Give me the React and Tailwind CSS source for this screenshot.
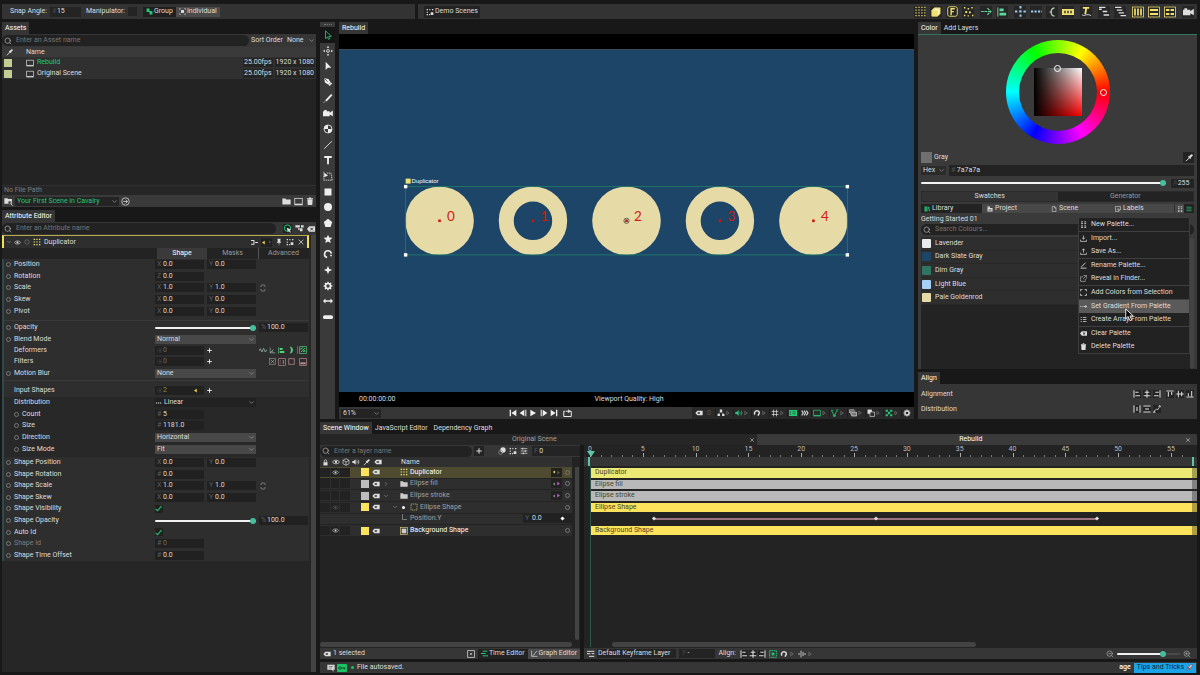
import React, { useState } from 'react';
import { ChevronDown, ChevronRight, Search, Rocket, ZoomIn, ZoomOut } from 'lucide-react';

// 12x12 glyphs, stroked with currentColor unless a shape says otherwise
const GLYPHS = {
  cursor: <path d="M3 1v9.5l2.3-2.2 1.3 2.9 1.6-.7-1.3-2.8H10z" strokeWidth="1" />,
  arrow: <path d="M3.2 1v9.8L5.8 8H10z" fill="currentColor" stroke="none" />,
  moveDots: (
    <g fill="currentColor" stroke="none">
      <path d="M6 0l1.6 2.2H4.4zM6 12l1.6-2.2H4.4zM0 6l2.2-1.6v3.2zM12 6L9.8 4.4v3.2z" />
      <circle cx="6" cy="6" r="1.7" fill="none" stroke="currentColor" />
    </g>
  ),
  pen: <g><path d="M1.5 1.5l5 .8 2.8 4.2-2.8 2.8-4.2-2.8z" fill="currentColor" stroke="none" /><path d="M2 2l3.6 3.6" stroke="#3a3a3a" strokeWidth=".9" /><path d="M7.3 10.3l3-3" strokeWidth="1.8" /></g>,
  pencil: <g><path d="M3.5 9.5l7-7.5" strokeWidth="2.2" /><path d="M1 11.5l1.2-1.2" strokeWidth="1.2" /></g>,
  camera: <path d="M0 4h1.5V2.5h3V4H8v1.6L11.8 3v7L8 7.8V10H0z" fill="currentColor" stroke="none" />,
  quad: (
    <g>
      <circle cx="6" cy="6" r="4.8" strokeWidth="1" />
      <path d="M6 6V1.2A4.8 4.8 0 0 0 1.2 6zM6 6v4.8A4.8 4.8 0 0 0 10.8 6z" fill="currentColor" stroke="none" />
    </g>
  ),
  line: <path d="M1.5 10.5l9-9" strokeWidth="1" />,
  text: <path d="M1.5 1.2h9v2.3H7.1V11H4.9V3.5H1.5z" fill="currentColor" stroke="none" />,
  box3d: (
    <g strokeWidth=".9">
      <path d="M1 1v10M1 11h10M11 11L9.5 2.5M4.5 2.5h5" strokeDasharray="1.6 .7" />
      <path d="M1.5 2l4.5 3.4-4.5 2z" fill="currentColor" stroke="none" />
    </g>
  ),
  square: <path d="M1.8 1.8h8.4v8.4H1.8z" fill="currentColor" stroke="none" />,
  disc: <circle cx="6" cy="6" r="4.8" fill="currentColor" stroke="none" />,
  pentagon: <path d="M6 1l5 3.8L9.2 10.8H2.8L1 4.8z" fill="currentColor" stroke="none" />,
  star: <path d="M6 .8l1.5 3.5 3.8.3-2.9 2.5.9 3.8L6 8.9l-3.3 2 .9-3.8L.7 4.6l3.8-.3z" fill="currentColor" stroke="none" />,
  arc: <path d="M5 10.2A4.1 4.1 0 1 1 10 5.6M9.9 7l-.6 1.6" strokeWidth="1.9" />,
  spark: <path d="M6 1l1.4 3.6L11 6 7.4 7.4 6 11 4.6 7.4 1 6l3.6-1.4z" fill="currentColor" stroke="none" />,
  gear: (
    <g>
      <circle cx="6" cy="6" r="3" strokeWidth="2" />
      <path d="M6 .8v2M6 9.2v2M.8 6h2M9.2 6h2M2.3 2.3l1.4 1.4M8.3 8.3l1.4 1.4M9.7 2.3L8.3 3.7M3.7 8.3L2.3 9.7" strokeWidth="1.7" />
    </g>
  ),
  widthArrow: <path d="M0 6l3-3v2h6V3l3 3-3 3V7H3v2z" fill="currentColor" stroke="none" />,
  pill: <rect x="0" y="4" width="12" height="4.5" rx="2" fill="currentColor" stroke="none" />,
  dots: <path d="M.5 1.5h11M.5 4.5h11M.5 7.5h11M.5 10.5h11" strokeDasharray="1.3 1.9" strokeWidth="1.3" />,
  cube: <g><path d="M1 4l3-3h7v7l-3 3H1z" fill="#fdf3b4" stroke="#c8b84a" /><path d="M1 4h7v7H1z" fill="#f0df71" stroke="none" /></g>,
  eff: <g><rect x=".8" y=".8" width="10.4" height="10.4" rx="2" strokeWidth="1" /><path d="M4.5 10V3h4M4.5 6.2h3" strokeWidth="1.5" /></g>,
  scatter: <path d="M1 1h1.6v1.6H1zM5 2.2h1.6v1.6H5zM9 1h1.6v1.6H9zM2.5 5.5h2v2h-2zM6.5 6h2v2h-2zM1 9.5h1.6v1.6H1zM9.8 9.5h1.6v1.6H9.8zM5 10h1.4v1.4H5z" fill="currentColor" stroke="none" />,
  toArrow: <path d="M0 6h10.5M7 2.5L10.8 6 7 9.5" strokeDasharray="3 .7" strokeWidth="1.3" />,
  alignL: <g><path d="M1 .5v11" strokeWidth="1.2" /><path d="M3 1.8h5v3.4H3zM3 6.8h8v3.4H3z" fill="currentColor" stroke="none" /></g>,
  plusDots: <path d="M6 0v12M0 6h12" strokeWidth="2.2" strokeDasharray="2.6 2" />,
  hDots: <path d="M0 6h12" strokeWidth="2.2" strokeDasharray="2.4 1.4" />,
  halfArc: <path d="M9 1C3.5 2 3.5 10 9 11M3 6h3" strokeWidth="1.4" />,
  ruler: <g><path d="M0 3h12v6H0z" fill="currentColor" stroke="none" /><path d="M3 4.8v2.4M6 4.8v2.4M9 4.8v2.4" stroke="#2a2a2a" strokeWidth="1.4" /></g>,
  textPath: <g><path d="M2 2h7M5.8 2L4.6 9" strokeWidth="2" /><path d="M1 9.5c3 2.5 5-2 10 1" stroke="#ddd" strokeWidth="1" /></g>,
  stagger: <path d="M0 1.5h7M0 3.5h3M4 6h5M5 9.8h6" strokeWidth="1.5" />,
  stagger2: <path d="M0 1.5h7M2 4.5h6M4 7.5h6M6 10.5h6" strokeWidth="1.6" />,
  cols: <g><rect x=".5" y="1" width="11" height="10" strokeWidth=".8" /><path d="M3 2.6v6.8M6 2.6v6.8M9 2.6v6.8" strokeWidth="1.7" /></g>,
  rows: <g><rect x=".5" y="1" width="11" height="10" strokeWidth=".8" /><path d="M2 4h8M2 8h8" strokeWidth="2" /></g>,
  cells: <g><rect x=".5" y="1" width="11" height="10" strokeWidth=".8" /><path d="M2 4h3.4M6.6 4H10M2 8h3.4M6.6 8H10" strokeWidth="2" /></g>,
  dropper: <g><path d="M1.5 10.8l5-5.2" strokeWidth="1.5" /><path d="M5 3.4l3.8 3.8" strokeWidth="1.4" /><path d="M7 5l3-3" strokeWidth="3.2" strokeLinecap="round" /></g>,
  screen: <g><rect x="1" y="1.8" width="10" height="7.6" strokeWidth="1" /><path d="M.5 10.2h11" strokeWidth="1.6" /></g>,
  folder: <path d="M.5 2h4l1 1.3h6V10H.5z" fill="currentColor" stroke="none" />,
  folderSearch: <g><path d="M.5 1.5h4l1 1.3h5V9H.5z" fill="currentColor" stroke="none" /><circle cx="7.5" cy="7.5" r="1.8" fill="#333" stroke="#888" strokeWidth="1" /><path d="M9 9l2.5 2.5" strokeWidth="1.2" /></g>,
  trash: <path d="M2 3.5h8L9.4 12H2.6zM1.5 1.8h3V.6h3v1.2h3V3h-9z" fill="currentColor" stroke="none" />,
  goArrow: <g strokeWidth="1"><circle cx="6" cy="6" r="5" /><path d="M3 6h5.5M6.3 3.6L8.8 6 6.3 8.4" /></g>,
  group: <path d="M1 1h5v4h5v6H6V7H1z" fill="currentColor" stroke="none" />,
  individual: <g><path d="M3.5 3.5h5v5h-5z" fill="currentColor" stroke="none" /><path d="M1 3V1h2M9 1h2v2M11 9v2H9M3 11H1V9" strokeWidth="1" /></g>,
  corners: <path d="M1 1.5h2v2H1zM5 1.5h1.6v2H5zM1 5.5h2v1.6H1zM1 9h2v2H1zM9 1.5h2v2H9zM7 6.5h4v4H7zM4.6 9h1.4v2H4.6z" fill="currentColor" stroke="none" />,
  eye: <g><path d="M.5 6C3 2.4 9 2.4 11.5 6 9 9.6 3 9.6.5 6z" strokeWidth="1.1" /><circle cx="6" cy="6" r="1.7" fill="currentColor" stroke="none" /></g>,
  ring: <circle cx="6" cy="6" r="4.4" strokeWidth="1.3" />,
  grid9: <path d="M1 2h10M1 6h10M1 10h10" strokeDasharray="2 2" strokeWidth="1.8" />,
  nodes: <path d="M0 2.5h5v3.5M0 9h5V6M7 6h5" strokeWidth="1.8" />,
  pin: <path d="M3.5 1h5v1.2H8v3l1.5 2H6.7L6 11.5 5.3 7.2H2.5L4 5.2v-3h-.5z" fill="currentColor" stroke="none" />,
  cross: <path d="M2.5 2.5l7 7M9.5 2.5l-7 7" strokeWidth="1.1" />,
  link: <path d="M3 4.5V3a1.5 1.5 0 0 1 1.5-1.5h3A1.5 1.5 0 0 1 9 3v1.5M3 7.5V9a1.5 1.5 0 0 0 1.5 1.5h3A1.5 1.5 0 0 0 9 9V7.5" strokeWidth="1.2" />,
  list: <path d="M1 2.5h2M5 2.5h6M1 6h2M5 6h6M1 9.5h2M5 9.5h6" strokeWidth="1.3" />,
  plus: <path d="M6 .5v11M.5 6h11" strokeWidth="2" />,
  wave: <path d="M0 7.5L2 4l2.5 5L7 3.5 9.5 9 12 5" strokeWidth="1.1" />,
  axes: <path d="M2 1v9h9M2 10l6-6M5 7.5l2 1" strokeWidth="1.1" />,
  paren: <path d="M4 1h2c4 2.5 4 7.5 0 10H4c2.6-3 2.6-7 0-10z" fill="currentColor" stroke="none" />,
  noise: <g><rect x="1" y="1" width="10" height="10" strokeWidth="1" /><path d="M3 5l3-3M3 9l6-6M6 9l3-3M3 3v2M9 7v2" strokeWidth="1.4" /></g>,
  xbox: <g strokeWidth="1"><rect x="1" y="1" width="10" height="10" /><path d="M3 3l6 6M9 3L3 9" stroke="#bbb" /></g>,
  halfBox: <g strokeWidth="1"><rect x="1" y="1" width="10" height="10" /><path d="M3.5 3v1M3.5 5.5v1M3.5 8v1" /><path d="M8 3v6" stroke="#bbb" /></g>,
  frame: <rect x="1.3" y="1.3" width="9.4" height="9.4" strokeWidth="1.3" />,
  pinkBox: <g strokeWidth="1"><rect x="1" y="1" width="10" height="10" /><path d="M2 8h8" strokeWidth="3" /></g>,
  target: <g><circle cx="6" cy="5.5" r="4.3" strokeWidth="1.3" /><path d="M5 5l6 2.4-2.4.8 2 2.3-1 1-2.2-2.2L6.5 11z" fill="#ddd" stroke="none" /></g>,
  branch: <path d="M.5 1.5h6v3h-6zM8 1.5h3.5v3H8zM4 5.5h2v2H4zM6.5 5.5H10v4H6.5z" fill="currentColor" stroke="none" />,
  tag: <path d="M.5 6l3-3.4H11.5v6.8H3.5zM4 5v2.2h3.4V5z" fill="currentColor" fillRule="evenodd" stroke="none" />,
  clearTag: <g><path d="M0 6l3.2-4H12v8H3.2z" fill="currentColor" stroke="none" /><path d="M5 4l4 4M9 4L5 8" stroke="#222" strokeWidth="1.3" /></g>,
  lock: <g><path d="M2.5 5.5h7V11h-7z" fill="currentColor" stroke="none" /><path d="M4 5.5V3.4a2 2 0 0 1 4 0v2.1" strokeWidth="1.2" /></g>,
  cubeLine: <path d="M6 1l4.6 2.5v5L6 11 1.4 8.5v-5zM1.4 3.5L6 6l4.6-2.5M6 6v5" strokeWidth="1" />,
  sound: <g><path d="M.5 4.5h2L5.5 2v8L2.5 7.5h-2z" fill="currentColor" stroke="none" /><path d="M7 4c1 1.2 1 2.8 0 4M8.8 2.5c2 2 2 5 0 7" strokeWidth="1.1" /></g>,
  skipStart: <path d="M1 1h2v10H1zM11 1v10L3.5 6z" fill="currentColor" stroke="none" />,
  stepBack: <path d="M8 1v10L1 6zM9.5 1H11v10H9.5z" fill="currentColor" stroke="none" />,
  play: <path d="M2 1v10l8.5-5z" fill="currentColor" stroke="none" />,
  stepFwd: <path d="M4 1v10l7-5zM1 1h1.6v10H1z" fill="currentColor" stroke="none" />,
  skipEnd: <path d="M9 1h2v10H9zM1 1v10l7.5-5z" fill="currentColor" stroke="none" />,
  loop: <g><path d="M3 3H1v7h10V3H9" strokeWidth="1.3" /><path d="M4 2.2h3V.4L10 3 7 5.6V3.8H4z" fill="currentColor" stroke="none" /></g>,
  triNodes: <g><path d="M4.2.8h3.6v3.6H4.2zM.8 7h3.6v3.6H.8zM7.6 7h3.6v3.6H7.6z" fill="currentColor" stroke="none" /><path d="M3 7l3-3 3 3" /></g>,
  triOpen: <path d="M3.5 2.5v7l5-3.5z" strokeWidth="1" />,
  triLeft: <path d="M9 1.5v9L2.5 6z" fill="currentColor" stroke="none" />,
  triRight: <path d="M3 1.5v9L9.5 6z" fill="currentColor" stroke="none" />,
  magnet: <path d="M2.8 8.4A3.7 3.7 0 1 1 9.6 6.2L7.4 10" strokeWidth="2.2" />,
  hash: <path d="M3.8 1v10M8.2 1v10M1 3.8h10M1 8.2h10" strokeWidth="1.1" />,
  image: <g><path d="M0 1.5h12v9H0z" fill="currentColor" stroke="none" /><path d="M5 4h5M5 7h5M2 3v6" stroke="#14532d" strokeWidth="1" /></g>,
  forward: <path d="M1 2.5L3.5 6 1 9.5M4.5 2.5L7 6 4.5 9.5M8 2.5L10.5 6 8 9.5" strokeWidth="1.6" />,
  vpath: <path d="M1 3l4 7 4-8M0 2h3M8 1.5h3M3.6 9h3v2h-3z" strokeWidth="1.2" />,
  layers: <g strokeWidth="1"><path d="M4 5h7.5v5.5H4z" fill="#777" /><path d="M2.5 8V3h7M.8 6V1.2h7" /></g>,
  copies: <g><path d="M.8 .8h6.4v6.4H.8z" fill="currentColor" stroke="none" /><path d="M4.5 4.5h6.7v6.7H4.5z" fill="#2a2a2a" /></g>,
  checker: <path d="M1 1h3.3v3.3H1zM7.7 1H11v3.3H7.7zM4.3 4.3h3.4v3.4H4.3zM1 7.7h3.3V11H1zM7.7 7.7H11V11H7.7z" fill="currentColor" stroke="none" />,
  bucket: <g><circle cx="7.5" cy="4.5" r="4" fill="currentColor" stroke="none" /><circle cx="4" cy="8" r="3" stroke="#999" /></g>,
  sliders: <path d="M1 2.5h10M1 6h10M1 9.5h10M4 1v3M8 4.5v3M5 8v3" strokeWidth="1.1" />,
  keyLayer: <path d="M0 2h11M0 5.5h5M7 5.5h4M3 9.5h8" strokeWidth="1.5" />,
  shape: <rect x="1.5" y="1.5" width="9" height="9" strokeWidth="1" stroke="#d8c97a" strokeDasharray="2 1" />,
  filledShape: <g><rect x=".7" y=".7" width="10.6" height="10.6" stroke="#d8c97a" /><path d="M2.5 2.5h7v7h-7z" fill="currentColor" stroke="none" /></g>,
  books: <path d="M1 1h2.6v10H1zM4.4 1H7v10H4.4zM8 1.8l2-.6 2 9-2 .6z" fill="currentColor" stroke="none" />,
  page: <path d="M2.5 1h5l2.5 2.5V11h-7.5zM7 1v3h3" strokeWidth="1.1" />,
  building: <path d="M1 1h5v3h5v7H1zM3 3.2h1.4v1H3zM3 6h6v1H3zM3 8.4h6v1H3z" fill="currentColor" fillRule="evenodd" stroke="none" />,
  label: <path d="M1 1h10v6l-4 4H1zM11 7H7v4M3.5 8L8 3.5" strokeWidth="1.1" />,
  download: <path d="M6 1v6M3.6 4.8L6 7.2l2.4-2.4M1 8v3h10V8" strokeWidth="1.2" />,
  upload: <path d="M6 8V1.5M3.6 4L6 1.4 8.4 4M1 8v3h10V8" strokeWidth="1.2" />,
  rename: <path d="M1 10.5h10M2 8.5l7.5-7" strokeWidth="1.5" />,
  reveal: <path d="M5 3H1v8h8V7M6 1h5v5M11 1L5.5 6.5" strokeWidth="1.1" strokeDasharray="2.5 .6" />,
  fourDots: <path d="M2 1.5h3M7.5 1.5h3M2 4.5h3M7.5 4.5h3M2 8.5h3M7.5 8.5h3M2 11h3M7.5 11h3" strokeWidth="1.6" />,
  focus: <path d="M1 4V1h3M8 1h3v3M11 8v3H8M4 11H1V8" strokeWidth="1.4" />,
  dashArrow: <path d="M0 6h1.5M3 6h1.5M6 6h5.5M9 4l2.4 2L9 8" strokeWidth="1.4" />,
  menu: <path d="M1 2.5h10M1 6h10M1 9.5h10" strokeWidth="1.4" />,
  alLeft: <path d="M1.5 .5v11M3.5 3.5h5M3.5 8.5h7" strokeWidth="1.6" />,
  alCenter: <path d="M6 .5v11M2.5 3.5h7M1 8.5h10" strokeWidth="1.6" />,
  alRight: <path d="M10.5 .5v11M3.5 3.5h5M1.5 8.5h7" strokeWidth="1.6" />,
  alTop: <path d="M.5 1.5h11M3.5 3v7M8.5 3v4.5" strokeWidth="1.6" />,
  alMid: <path d="M.5 6h11M3.5 1v10M8.5 2.5v7" strokeWidth="1.6" />,
  alBottom: <path d="M.5 10.5h11M3.5 5v4M8.5 1.5v8" strokeWidth="1.6" />,
  distH: <path d="M1.5 .5v11M10.5 .5v11M6 3v6" strokeWidth="1.6" />,
  distV: <path d="M.5 1.5h11M.5 10.5h11M3 6h6" strokeWidth="1.6" />,
  distP: <path d="M1 9.5h2v2H1zM9 1h2v2H9zM2.5 9l2-3 3 1L9.5 3" strokeWidth="1.4" strokeDasharray="2 .7" />,
  keyBox: <g><rect x="1" y="1" width="10" height="10" strokeWidth="1.1" /><path d="M4.8 4.8h2.4v2.4H4.8z" fill="currentColor" stroke="none" /></g>,
  timeLines: <path d="M3 2h8M0 6h8M3 10h9" strokeWidth="1.7" />,
  curve: <path d="M1 1v10h10M2.5 9.5C8 9 5 3 11 2" strokeWidth="1.1" />,
  gridBox: <g><rect x="1" y="1" width="10" height="10" strokeWidth="1.4" strokeDasharray="2.4 .8" /><path d="M4 4h4v4H4z" fill="currentColor" stroke="none" /></g>,
  spread: <path d="M4.5 1v10M7.5 3v6M0 6h3M8.5 6H12" strokeWidth="1.2" />,
  chat: <path d="M.5 1h11v7.5H9L11 11.5 6.5 8.5h-6zM2.5 3.3v1h7v-1zM2.5 5.5v1h5v-1z" fill="currentColor" fillRule="evenodd" stroke="none" />,
  key: <path d="M5 6h6M9.5 6v2M3 4.2a1.8 1.8 0 1 0 .1 0" strokeWidth="1.3" />,
  check: <path d="M1 6.5l3.4 3.4L11 1.8" strokeWidth="1.8" />,
};

function Icon({ name, className = 'size-[9px]' }) {
  return (
    <svg viewBox="0 0 12 12" fill="none" stroke="currentColor" className={`shrink-0 ${className}`} aria-hidden="true">
      {GLYPHS[name]}
    </svg>
  );
}

function IconButton({ name, label, className = '', size }) {
  return (
    <button type="button" aria-label={label || name} className={`flex shrink-0 items-center justify-center ${className}`}>
      <Icon name={name} className={size} />
    </button>
  );
}

function Tab({ children, active }) {
  return (
    <button type="button" className={`h-3 px-[3px] ${active ? 'bg-[#363636] text-white' : 'text-[#dddddd]'}`}>
      {children}
    </button>
  );
}

function Field({ id, prefix, value, dim, label }) {
  return (
    <div className="flex h-[9px] w-[49px] shrink-0 items-center bg-[#212121] pl-[2px]">
      <span className="w-[6px] shrink-0 text-[#5d5d5d]">{prefix}</span>
      <input id={id} aria-label={label} defaultValue={value} className={`h-[9px] w-full min-w-0 bg-transparent outline-none ${dim ? 'text-[#6a6a6a]' : ''}`} />
    </div>
  );
}

function Dropdown({ id, label, value, className, icon }) {
  return (
    <div className={`relative flex h-[9px] shrink-0 items-center ${className}`}>
      {icon && <Icon name={icon} className="ml-[1px] size-[6px]" />}
      <select id={id} aria-label={label} className="h-[9px] w-full appearance-none bg-transparent pl-[2px] outline-none">
        <option>{value}</option>
      </select>
      <ChevronDown className="pointer-events-none absolute right-[1px] size-[7px] text-[#aaaaaa]" />
    </div>
  );
}

function Slider({ id, label, value = 100, className }) {
  return (
    <input
      id={id}
      aria-label={label}
      type="range"
      defaultValue={value}
      className={`h-[2px] appearance-none rounded-full [&::-webkit-slider-thumb]:size-[6px] [&::-webkit-slider-thumb]:appearance-none [&::-webkit-slider-thumb]:rounded-full [&::-webkit-slider-thumb]:bg-[#46bd9b] ${className}`}
      style={{ background: `linear-gradient(to right, #f2f2f2 ${value}%, #4a4a4a ${value}%)` }}
    />
  );
}

function SearchBox({ placeholder, className }) {
  return (
    <label className={`flex h-[11px] min-w-0 items-center gap-[4px] rounded-full bg-[#222222] pl-[2px] ${className}`}>
      <Search className="size-[8px] shrink-0 text-[#bbbbbb]" />
      <input aria-label={placeholder} placeholder={placeholder} className="h-[9px] w-full min-w-0 bg-transparent outline-none placeholder:text-[#757575]" />
    </label>
  );
}

const TRANSFORM = [
  { name: 'Position', x: '0.0', y: '0.0' },
  { name: 'Rotation', p: 'Z', x: '0.0' },
  { name: 'Scale', x: '1.0', y: '1.0', link: true },
  { name: 'Skew', x: '0.0', y: '0.0' },
  { name: 'Pivot', x: '0.0', y: '0.0' },
];

const APPEARANCE = [
  { name: 'Opacity', slider: true },
  { name: 'Blend Mode', select: 'Normal' },
  { name: 'Deformers', list: '0', noKey: true, extras: 'deformers' },
  { name: 'Filters', list: '0', noKey: true, extras: 'filters' },
  { name: 'Motion Blur', select: 'None' },
];

const DISTRIBUTION = [
  { name: 'Distribution', select: 'Linear', icon: 'hDots', dark: true, noKey: true },
  { name: 'Count', p: '#', x: '5', sub: true },
  { name: 'Size', p: '#', x: '1181.0', sub: true },
  { name: 'Direction', select: 'Horizontal', sub: true },
  { name: 'Size Mode', select: 'Fit', sub: true },
];

const SHAPE = [
  { name: 'Shape Position', x: '0.0', y: '0.0' },
  { name: 'Shape Rotation', p: '#', x: '0.0' },
  { name: 'Shape Scale', x: '1.0', y: '1.0', link: true },
  { name: 'Shape Skew', x: '0.0', y: '0.0' },
  { name: 'Shape Visibility', check: true },
  { name: 'Shape Opacity', slider: true },
  { name: 'Auto Id', check: true },
  { name: 'Shape Id', p: '#', x: '0', dim: true },
  { name: 'Shape Time Offset', p: '#', x: '0.0' },
];

function AttributeRow({ row }) {
  const id = row.name.toLowerCase().replaceAll(' ', '-');
  return (
    <div className="flex items-center">
      <div className={`flex w-[151px] shrink-0 items-center gap-[3px] ${row.sub ? 'pl-[10px]' : 'pl-[2px]'}`}>
        {row.noKey ? <span className="w-[5px]" /> : <button type="button" aria-label={`Keyframe ${row.name}`} className="size-[5px] rounded-full border border-[#777777]" />}
        <label htmlFor={id} className={row.dim ? 'text-[#7d7d7d]' : ''}>{row.name}</label>
      </div>
      {row.x && (
        <div className="flex items-center gap-[3px]">
          <Field id={id} prefix={row.p || 'X'} value={row.x} dim={row.dim} />
          {row.y && <Field label={`${row.name} Y`} prefix="Y" value={row.y} />}
          {row.link && <IconButton name="link" label={`Link ${row.name}`} size="size-[8px]" className="text-[#8c8c8c]" />}
        </div>
      )}
      {row.select && <Dropdown id={id} value={row.select} icon={row.icon} className={row.dark ? 'w-[101px] bg-[#212121]' : 'w-[101px] bg-[#484848]'} />}
      {row.slider && (
        <>
          <Slider id={id} className="w-[101px]" />
          <div className="ml-[3px]"><Field label={`${row.name} value`} prefix="%" value="100.0" /></div>
        </>
      )}
      {row.check && (
        <span className="relative flex size-[8px] items-center">
          <input id={id} type="checkbox" defaultChecked className="size-[8px] appearance-none bg-[#212121]" />
          <Icon name="check" className="pointer-events-none absolute left-0 size-[7px] text-[#24c777]" />
        </span>
      )}
      {row.list && (
        <>
          <div className={`flex h-[9px] w-[49px] items-center bg-[#212121] pl-[2px] ${row.yellow ? 'text-[#8f8a3c]' : 'text-[#6a6a6a]'}`}>
            <Icon name="list" className="mr-[1px] size-[5px] text-[#555555]" />
            <input id={id} defaultValue={row.list} className="h-[9px] w-full min-w-0 bg-transparent outline-none" />
            {row.yellow && <Icon name="triLeft" className="mr-[6px] size-[5px] text-[#f2d64b]" />}
          </div>
          <IconButton name="plus" label={`Add to ${row.name}`} size="size-[5px]" className="ml-[2px] size-[7px] text-white" />
        </>
      )}
      {row.extras === 'deformers' && (
        <div className="ml-auto flex items-center gap-[2px] pr-[2px] text-[#4fd07a]">
          <IconButton name="wave" size="size-[8px]" className="text-[#9fc3ad]" />
          <IconButton name="axes" size="size-[7px]" className="text-[#9fc3ad]" />
          <IconButton name="alignL" size="size-[7px]" />
          <IconButton name="paren" size="size-[8px]" />
          <IconButton name="noise" size="size-[8px]" className="border-l border-[#3e7d55] pl-[1px]" />
        </div>
      )}
      {row.extras === 'filters' && (
        <div className="ml-auto flex items-center gap-[2px] pr-[2px] text-[#b98a93]">
          <IconButton name="xbox" size="size-[7px]" className="text-[#999999]" />
          <IconButton name="halfBox" size="size-[8px]" />
          <IconButton name="frame" size="size-[7px]" />
          <IconButton name="pinkBox" size="size-[8px]" className="pl-[2px]" />
        </div>
      )}
    </div>
  );
}

function TopBar() {
  return (
    <header className="flex h-[15px] shrink-0 gap-[3px]">
      <div className="flex w-[413px] items-center bg-[#333333] pl-[8px]">
        <label htmlFor="snap-angle">Snap Angle:</label>
        <span className="ml-[3px] flex h-[10px] w-[31px] items-center bg-[#242424] pl-[2px]">
          <span className="w-[6px] text-[#444444]">#</span>
          <input id="snap-angle" defaultValue="15" className="w-full min-w-0 bg-transparent outline-none" />
        </span>
        <label htmlFor="manipulator" className="ml-[5px]">Manipulator:</label>
        <input id="manipulator" type="checkbox" className="ml-[3px] size-[9px] appearance-none bg-[#242424]" />
        <div className="ml-[6px] flex h-[10px]">
          <button type="button" className="flex items-center gap-[1px] bg-[#202020] px-[3px]">
            <Icon name="group" className="size-[7px] text-[#24c777]" />Group
          </button>
          <button type="button" className="flex items-center gap-[1px] bg-[#4b4b4b] px-[3px]">
            <Icon name="individual" className="size-[7px]" />Individual
          </button>
        </div>
      </div>
      <div className="flex min-w-0 flex-1 items-center bg-[#333333] pl-[6px]">
        <button type="button" className="flex h-[12px] items-center gap-[1px] rounded-[2px] bg-[#232323] px-[2px]">
          <Icon name="corners" className="size-[8px]" />Demo Scenes
        </button>
        <div className="ml-auto flex items-center gap-[4px] pr-[3px] text-[#f0df71] [&>button]:size-[12px] [&>button]:bg-[#262626]">
          <IconButton name="dots" size="size-[11px]" />
          <IconButton name="cube" size="size-[10px]" />
          <IconButton name="eff" size="size-[11px]" />
          <IconButton name="scatter" size="size-[11px]" />
          <IconButton name="toArrow" size="size-[11px]" className="ml-[2px] text-[#5fd69b]" />
          <IconButton name="alignL" size="size-[10px]" className="text-[#5fd69b]" />
          <IconButton name="plusDots" size="size-[11px]" className="ml-[2px] text-[#9cc9ee]" />
          <IconButton name="hDots" size="size-[11px]" className="text-[#9cc9ee]" />
          <IconButton name="halfArc" size="size-[10px]" className="text-[#b9d7bd]" />
          <IconButton name="ruler" size="size-[12px]" />
          <IconButton name="textPath" size="size-[11px]" className="ml-[2px]" />
          <IconButton name="stagger" size="size-[11px]" className="ml-[2px] text-[#dddddd]" />
          <IconButton name="stagger2" size="size-[11px]" className="text-[#dddddd]" />
          <IconButton name="cols" size="size-[12px]" className="ml-[2px]" />
          <IconButton name="rows" size="size-[12px]" />
          <IconButton name="cells" size="size-[12px]" />
          <IconButton name="camera" size="size-[11px]" className="ml-[2px] text-[#dddddd]" />
        </div>
      </div>
    </header>
  );
}

function Assets() {
  const assets = ['Rebuild', 'Original Scene'];
  return (
    <section className="flex flex-col">
      <div className="flex"><Tab active>Assets</Tab></div>
      <div className="flex h-[13px] items-center bg-[#363636]">
        <SearchBox placeholder="Enter an Asset name" className="w-[247px]" />
        <label htmlFor="sort-order" className="ml-[2px] whitespace-nowrap">Sort Order</label>
        <Dropdown id="sort-order" value="None" className="ml-auto w-[31px]" />
      </div>
      <table className="w-full border-collapse text-left">
        <thead className="bg-[#3a3a3a]">
          <tr className="h-[10px]">
            <th className="w-[23px] p-0 pl-[4px] font-normal"><Icon name="dropper" className="size-[7px]" /></th>
            <th className="p-0 pl-[1px] font-normal">Name</th>
            <th className="p-0" aria-label="Format" />
          </tr>
        </thead>
        <tbody className="bg-[#303030]">
          {assets.map((name, i) => (
            <tr key={name} className="h-[11px]">
              <td className="p-0 pl-[2px]"><span className="block size-[8px] bg-[#c4cd93]" /></td>
              <td className="p-0">
                <span className={`flex items-center gap-[3px] pl-[1px] ${i === 0 ? 'text-[#24c777]' : ''}`}>
                  <Icon name="screen" className="size-[8px] text-[#dddddd]" />{name}
                </span>
              </td>
              <td className="p-0 pr-[1px]">
                <span className="flex justify-end gap-[2px]"><span className="bg-[#242424] px-[1px]">25.00fps</span><span className="bg-[#242424] px-[1px]">1920 x 1080</span></span>
              </td>
            </tr>
          ))}
        </tbody>
      </table>
      <div className="h-[106px] bg-[#232323]" />
      <p className="h-[10px] border-t border-[#303030] bg-[#262626] pl-[2px] text-[#7d7d7d]">No File Path</p>
      <div className="flex h-[12px] items-center bg-[#3a3a3a] px-[2px]">
        <Icon name="folderSearch" className="size-[9px]" />
        <Dropdown label="Scene group" value="Your First Scene in Cavalry" className="ml-[2px] w-[104px] bg-[#242424] text-[#24c777]" />
        <IconButton name="goArrow" label="Go" size="size-[9px]" className="ml-[2px]" />
        <div className="ml-auto flex gap-[3px]">
          <IconButton name="folder" label="New folder" />
          <IconButton name="screen" label="New composition" />
          <IconButton name="trash" label="Delete" size="size-[8px]" />
        </div>
      </div>
    </section>
  );
}

function AttributeEditor() {
  return (
    <section className="flex min-h-0 flex-1 flex-col">
      <div className="flex"><Tab active>Attribute Editor</Tab></div>
      <div className="flex h-[13px] shrink-0 items-center bg-[#363636]">
        <SearchBox placeholder="Enter an Attribute name" className="w-[274px]" />
        <div className="ml-auto flex gap-[3px] pr-[1px]">
          <IconButton name="target" className="bg-[#222222] text-[#24c777]" />
          <IconButton name="branch" />
          <IconButton name="clearTag" label="Clear" size="size-[8px]" />
        </div>
      </div>
      <div className="flex min-h-0 flex-1 bg-[#262626]">
        <div className="w-[307px]">
          <div className="flex h-[13px] items-center border-x-2 border-t border-[#f2dc5c] border-t-[#b9ab4c] bg-[#2e2e2e] px-[2px]">
            <ChevronDown className="size-[6px] text-[#aaaaaa]" />
            <Icon name="eye" className="ml-[2px] size-[7px]" />
            <Icon name="ring" className="ml-[3px] size-[6px] text-[#777777]" />
            <Icon name="grid9" className="ml-[3px] size-[8px] text-[#f0df71]" />
            <span className="ml-[3px]">Duplicator</span>
            <div className="ml-auto flex items-center gap-[3px]">
              <IconButton name="nodes" size="size-[7px]" />
              <span className="flex h-[9px] w-[11px] items-center justify-between bg-[#212121]">
                <Icon name="triLeft" className="size-[5px] text-[#f2d64b]" /><Icon name="triRight" className="size-[4px] text-[#555555]" />
              </span>
              <IconButton name="pin" size="size-[8px]" />
              <IconButton name="corners" size="size-[8px]" />
              <IconButton name="cross" label="Close" size="size-[8px]" />
            </div>
          </div>
          <div className="flex h-[11px] bg-[#232323] pl-[155px] text-[#9a9a9a]">
            <button type="button" className="w-[50px] bg-[#3a3a3a] text-white">Shape</button>
            <button type="button" className="w-[51px]">Masks</button>
            <button type="button" className="w-[50px] border-l border-[#555555]">Advanced</button>
          </div>
          <div className="border-l-2 border-[#2f4a4c] bg-[#2e2e2e]">
            <div className="grid h-[58px] auto-rows-fr">
              {TRANSFORM.map((row) => <AttributeRow key={row.name} row={row} />)}
            </div>
            <div className="mt-[3px] grid h-[61px] auto-rows-fr border-y border-[#3a3a3a] py-[1px]">
              {APPEARANCE.map((row) => <AttributeRow key={row.name} row={row} />)}
            </div>
            <div className="grid h-[16px] pt-[3px]">
              <AttributeRow row={{ name: 'Input Shapes', list: '2', noKey: true, yellow: true }} />
            </div>
            <div className="grid h-[60px] auto-rows-fr bg-[#282828] pb-[2px]">
              {DISTRIBUTION.map((row) => <AttributeRow key={row.name} row={row} />)}
            </div>
            <div className="grid h-[104px] auto-rows-fr">
              {SHAPE.map((row) => <AttributeRow key={row.name} row={row} />)}
            </div>
          </div>
        </div>
        <div className="flex-1 border-l-2 border-[#262626] bg-[#434343]" />
      </div>
    </section>
  );
}

const TOOLS = ['cursor', 'moveDots', 'arrow', 'pen', 'pencil', 'camera', 'quad', 'line', 'text', 'box3d', 'square', 'disc', 'pentagon', 'star', 'arc', 'spark', 'gear', 'widthArrow', 'pill'];

function ToolStrip() {
  return (
    <nav aria-label="Tools" className="w-[15px] shrink-0 bg-[#3a3a3a]">
      <div className="flex h-[5px] items-center justify-center">
        <span className="w-[8px] border-t border-dotted border-[#777777]" />
      </div>
      <div className="grid h-[298px] auto-rows-fr">
        {TOOLS.map((tool, i) => (
          <IconButton key={tool} name={tool} size="size-[10px]" className={i === 0 ? 'bg-[#161616] text-[#24c777]' : 'text-[#eeeeee]'} />
        ))}
      </div>
    </nav>
  );
}

const DISCS = [439, 532.7, 626.5, 720.2, 814];

function Viewport() {
  return (
    <main className="flex min-w-0 flex-1 flex-col">
      <div className="flex"><Tab active>Rebuild</Tab></div>
      <div className="h-[15px] bg-black" />
      <svg viewBox="339 49 575 343" preserveAspectRatio="xMidYMid meet" className="min-h-0 w-full flex-1 border-t border-[#3d4c58] bg-[#1d4568]" role="img" aria-label="Duplicator composition">
        {DISCS.map((cx, i) => (
          <g key={cx}>
            {i % 2 ? <circle cx={cx} cy="220.3" r="26.8" fill="none" stroke="#e6dba6" strokeWidth="15" /> : <circle cx={cx} cy="220.3" r="34.4" fill="#e6dba6" />}
            {i === 2 && <circle cx={cx} cy="220.3" r="2.6" fill="none" stroke="#444444" strokeWidth=".8" />}
            <rect x={cx - 1.3} y="219" width="2.6" height="2.6" fill="#cc1410" />
            <text x={cx + 7.5} y="220.5" fontSize="13.5" fill="#d01a12" fontFamily="Lato">{i}</text>
          </g>
        ))}
        <rect x="405" y="186" width="443" height="68.5" fill="none" stroke="#1e7a68" strokeWidth=".9" />
        {[405, 848].map((x) => [186, 254.5].map((y) => <rect key={`${x}${y}`} x={x - 1.7} y={y - 1.7} width="3.4" height="3.4" fill="#ffffff" />))}
        <rect x="405" y="178" width="5" height="5" fill="#efe272" />
        <text x="411" y="182.6" fontSize="6" fill="#ffffff" fontFamily="Liberation Sans">Duplicator</text>
      </svg>
      <div className="flex h-[15px] items-center bg-black">
        <span className="pl-[20px]">00:00:00:00</span>
        <span className="ml-[199px]">Viewport Quality: High</span>
      </div>
      <div className="flex h-[12px] items-center bg-[#363636] pl-[2px]">
        <Dropdown label="Zoom" value="61%" className="w-[40px] bg-[#242424]" />
        <div className="ml-[127px] flex items-center gap-[2px] text-[#eeeeee]">
          <IconButton name="skipStart" size="size-[8px]" className="w-[9px]" />
          <IconButton name="stepBack" size="size-[8px]" className="w-[8px]" />
          <IconButton name="play" size="size-[8px]" className="w-[8px]" />
          <IconButton name="stepFwd" size="size-[8px]" className="w-[9px]" />
          <IconButton name="skipEnd" size="size-[8px]" className="w-[8px]" />
          <IconButton name="loop" label="Loop" size="size-[9px]" className="ml-[3px]" />
        </div>
        <div className="ml-auto flex h-full items-center gap-[2px] bg-[#292929] px-[3px] text-[#dddddd]">
          <IconButton name="tag" size="size-[8px]" />
          <span className="px-[2px] text-[#555555]">0</span>
          {[
            ['triNodes', true], ['sound', true, 'text-[#24c777]'], ['magnet', true], ['hash', true],
            ['image', false, 'text-[#24c777]'], ['forward', false], ['screen', true, 'text-[#24c777]'],
            ['vpath', true, 'text-[#24c777]'], ['layers', true], ['copies', true], ['checker', true, 'text-[#24c777]'], ['gear', false],
          ].map(([name, more, color = '']) => (
            <span key={name} className="flex items-center border-l border-[#1c1c1c] pl-[1px]">
              <IconButton name={name} size="size-[8px]" className={color} />
              {more && <IconButton name="triOpen" label={`${name} options`} size="size-[6px]" className="text-[#888888]" />}
            </span>
          ))}
        </div>
      </div>
    </main>
  );
}

const SWATCHES = [
  { name: 'Lavender', color: 'bg-[#e8eaec]' },
  { name: 'Dark Slate Gray', color: 'bg-[#1d4568]' },
  { name: 'Dim Gray', color: 'bg-[#2f7561]' },
  { name: 'Light Blue', color: 'bg-[#a5d0f8]' },
  { name: 'Pale Goldenrod', color: 'bg-[#e6dba6]' },
];

const MENU = [
  ['fourDots', 'New Palette...', true],
  ['download', 'Import...'],
  ['upload', 'Save As...', true],
  ['rename', 'Rename Palette...'],
  ['reveal', 'Reveal in Finder...', true],
  ['focus', 'Add Colors from Selection', true],
  ['dashArrow', 'Set Gradient From Palette'],
  ['list', 'Create Array From Palette', true],
  ['clearTag', 'Clear Palette'],
  ['trash', 'Delete Palette'],
];

function PaletteMenu() {
  const [active, setActive] = useState('Set Gradient From Palette');
  return (
    <div role="menu" className="absolute top-[3px] right-[4px] w-[112px] border border-[#3c3c3c] bg-[#222222]">
      {MENU.map(([icon, text, line]) => (
        <button
          key={text}
          type="button"
          role="menuitem"
          onMouseEnter={() => setActive(text)}
          className={`flex w-full items-center gap-[4px] pl-[1px] ${line ? 'h-[14px] border-b border-[#3f3f3f]' : 'h-[13px]'} ${active === text ? 'bg-[#5a5a5a]' : ''}`}
        >
          <Icon name={icon} className="size-[7px]" />
          {text}
        </button>
      ))}
      <svg viewBox="0 0 12 18" className="absolute top-[90px] left-[46px] h-[14px] w-[9px]" aria-hidden="true">
        <path d="M1 1v13l3.2-3 2.3 5.5 2.4-1-2.3-5.2H11z" fill="#000000" stroke="#ffffff" strokeWidth="1.2" />
      </svg>
    </div>
  );
}

function ColorPanel() {
  return (
    <section className="flex min-h-0 flex-1 flex-col">
      <div className="flex"><Tab active>Color</Tab><Tab>Add Layers</Tab></div>
      <div className="flex min-h-0 flex-1 flex-col border-t border-[#2f7561] bg-[#3a3a3a]">
        <div className="relative mx-auto mt-[5px] flex size-[104px] shrink-0 items-center justify-center rounded-full bg-[conic-gradient(from_90deg,#f00,#f0f,#00f,#0ff,#0f0,#ff0,#f00)]">
          <div className="flex size-[78px] items-center justify-center rounded-full bg-[#3a3a3a]">
            <div className="size-[48px] bg-[linear-gradient(to_right,black,transparent),linear-gradient(to_bottom,white,red)]" />
          </div>
          <span className="absolute top-[25px] size-[7px] rounded-full border border-white" />
          <span className="absolute right-[3px] size-[7px] rounded-full border border-white" />
        </div>
        <div className="mt-[8px] flex items-center gap-[2px] px-[3px]">
          <span className="size-[11px] bg-[#6f6f6f]" />
          Gray
          <IconButton name="dropper" label="Pick colour" size="size-[8px]" className="ml-auto size-[11px] bg-[#232323]" />
        </div>
        <div className="mt-[2px] flex items-center gap-[3px] px-[3px]">
          <Dropdown label="Colour format" value="Hex" className="w-[25px] bg-[#2b2b2b]" />
          <label className="flex h-[11px] flex-1 items-center bg-[#232323] pl-[2px]">
            <span className="w-[6px] text-[#555555]">#</span>
            <input aria-label="Hex value" defaultValue="7a7a7a" className="h-[9px] w-full bg-transparent outline-none" />
          </label>
        </div>
        <div className="mt-[2px] flex h-[10px] items-center gap-[5px] px-[3px]">
          <Slider label="Alpha" className="min-w-0 flex-1" />
          <label className="flex h-[9px] w-[23px] items-center bg-[#232323] pl-[2px]">
            <span className="w-[6px] text-[#444444]">A</span>
            <input aria-label="Alpha value" defaultValue="255" className="h-[9px] w-full min-w-0 bg-transparent outline-none" />
          </label>
        </div>
        <div className="mx-[3px] mt-[3px] grid h-[11px] grid-cols-2 border border-[#2a2a2a] bg-[#232323] text-[#9a9a9a]">
          <button type="button" className="bg-[#333333] text-[#dddddd]">Swatches</button>
          <button type="button">Generator</button>
        </div>
        <div className="mx-[3px] mt-[2px] flex h-[9px] bg-[#484848]">
          <button type="button" className="flex w-[61px] items-center gap-[2px] bg-[#232323] pl-[3px]"><Icon name="books" className="size-[6px] text-[#24c777]" />Library</button>
          <button type="button" className="flex w-[64px] items-center gap-[2px] pl-[5px]"><Icon name="building" className="size-[6px]" />Project</button>
          <button type="button" className="flex w-[64px] items-center gap-[2px] pl-[5px]"><Icon name="page" className="size-[6px]" />Scene</button>
          <button type="button" className="flex flex-1 items-center gap-[2px] pl-[5px]"><Icon name="label" className="size-[6px]" />Labels</button>
          <IconButton name="fourDots" label="Grid view" size="size-[6px]" className="w-[10px] border-l border-[#333333]" />
          <IconButton name="menu" label="List view" size="size-[6px]" className="w-[10px] bg-[#232323] text-[#24c777]" />
        </div>
        <div className="relative mx-[3px] mt-[1px] flex min-h-0 flex-1 flex-col">
          <p className="h-[10px] pt-[1px]">Getting Started 01</p>
          <SearchBox placeholder="Search Colours..." className="shrink-0" />
          <div className="mt-[2px] flex min-h-0 flex-1 bg-[#232323]">
            <ul className="grid h-[68px] flex-1 auto-rows-fr bg-[#2e2e2e]">
              {SWATCHES.map((s) => (
                <li key={s.name} className="flex items-center gap-[4px] border-b border-[#282828] pl-[1px]">
                  <span className={`size-[9px] rounded-[1px] ${s.color}`} />{s.name}
                </li>
              ))}
            </ul>
            <div className="ml-[2px] w-[4px] rounded-full bg-[#434343]" />
          </div>
          <PaletteMenu />
        </div>
      </div>
    </section>
  );
}

function AlignPanel() {
  return (
    <section>
      <div className="flex"><Tab active>Align</Tab></div>
      <div className="flex h-[35px] flex-col justify-center gap-[6px] bg-[#363636] px-[3px]">
        <div className="flex items-center gap-[2px]">
          <span className="mr-auto">Alignment</span>
          {['alLeft', 'alCenter', 'alRight'].map((n) => <IconButton key={n} name={n} size="size-[8px]" className="bg-[#232323]" />)}
          <span className="w-[1px]" />
          {['alTop', 'alMid', 'alBottom'].map((n) => <IconButton key={n} name={n} size="size-[8px]" className="bg-[#232323]" />)}
        </div>
        <div className="flex items-center gap-[2px] pr-[33px]">
          <span className="mr-auto">Distribution</span>
          {['distH', 'distV', 'distP'].map((n) => <IconButton key={n} name={n} size="size-[8px]" className="bg-[#232323]" />)}
        </div>
      </div>
    </section>
  );
}

const LAYERS = [
  { name: 'Duplicator', icon: 'grid9', iconColor: 'text-[#f0df71]', swatch: 'bg-[#fde35c]', eye: true, bar: 'bg-[#ece974]', selected: true },
  { name: 'Elipse fill', icon: 'folder', swatch: 'bg-[#bdbdbd]', chevron: 'right', bar: 'bg-[#b9b9b9]', dim: true, magenta: true },
  { name: 'Elipse stroke', icon: 'folder', swatch: 'bg-[#bdbdbd]', chevron: 'down', bar: 'bg-[#b9b9b9]', dim: true, magenta: true },
  { name: 'Ellipse Shape', icon: 'shape', swatch: 'bg-[#fde35c]', eye: true, eyeDim: true, nested: true, bar: 'bg-[#fde35c]', dim: true },
  { name: 'Position.Y', property: true, keys: [6, 27, 48] },
  { name: 'Background Shape', icon: 'filledShape', swatch: 'bg-[#fde35c]', eye: true, bar: 'bg-[#fde35c]' },
];

function LayerRow({ layer }) {
  if (layer.property) {
    return (
      <div className="flex items-center bg-[#2e2e2e] pl-[82px] text-[#a0a0a0]">
        <span className="mb-[3px] h-[6px] w-[5px] border-b border-l border-[#777777]" />
        <label htmlFor="position-y" className="ml-[3px]">{layer.name}</label>
        <span className="ml-auto flex h-[9px] w-[49px] items-center bg-[#212121] pl-[2px] text-[#dddddd]">
          <span className="w-[7px] shrink-0 text-[#5d5d5d]">Y</span>
          <input id="position-y" defaultValue="0.0" className="h-[9px] w-full min-w-0 bg-transparent outline-none" />
          <span className="mr-[8px] size-[3px] shrink-0 rotate-45 bg-white" />
        </span>
      </div>
    );
  }
  return (
    <div className={`flex items-center ${layer.selected ? 'bg-[#4f4b31]' : 'bg-[#2e2e2e]'} ${layer.dim ? 'text-[#a0a0a0]' : 'text-white'}`}>
      <span className="h-[9px] w-[10px] bg-[#222222]" />
      <button type="button" aria-label={`Toggle ${layer.name}`} className={`flex h-[9px] w-[10px] items-center justify-center border-x border-[#2e2e2e] bg-[#222222] ${layer.eyeDim ? 'text-[#555555]' : 'text-[#cccccc]'}`}>
        {layer.eye && <Icon name="eye" className="size-[7px]" />}
      </button>
      <span className="h-[9px] w-[10px] bg-[#222222]" />
      <span className={`ml-[11px] size-[8px] ${layer.swatch}`} />
      <Icon name="tag" className="ml-[3px] size-[8px] text-[#dddddd]" />
      <span className={`flex items-center ${layer.nested ? 'w-[25px] justify-end' : 'w-[11px] justify-center'}`}>
        {layer.chevron === 'right' && <ChevronRight className="size-[6px]" />}
        {layer.chevron === 'down' && <ChevronDown className="size-[6px]" />}
        {layer.nested && <><ChevronDown className="size-[6px]" /><span className="ml-[4px] size-[3px] rounded-full bg-white" /></>}
      </span>
      <Icon name={layer.icon} className={`size-[8px] ${layer.nested ? 'ml-[5px]' : 'ml-[9px]'} ${layer.iconColor || 'text-[#cccccc]'}`} />
      <span className="ml-[2px]">{layer.name}</span>
      <span className="ml-auto flex items-center gap-[3px] pr-[2px]">
        {(layer.selected || layer.magenta) && (
          <span className="flex h-[9px] w-[11px] items-center justify-between bg-[#212121] px-[1px]">
            <Icon name="triLeft" className={`size-[4px] ${layer.selected ? 'text-[#f2d64b]' : 'text-[#888888]'}`} />
            <Icon name="triRight" className={`size-[5px] ${layer.magenta ? 'text-[#d04fe0]' : 'text-[#555555]'}`} />
          </span>
        )}
        <span className="size-[5px] rounded-full border border-[#777777]" />
      </span>
    </div>
  );
}

function LayerList() {
  return (
    <section className="flex w-[260px] shrink-0 flex-col bg-[#232323]">
      <div className="flex h-[12px] shrink-0 items-center bg-[#363636]">
        <SearchBox placeholder="Enter a layer name" className="w-[152px]" />
        <IconButton name="plus" label="Add layer" size="size-[6px]" className="ml-[2px] size-[10px] bg-[#232323]" />
        <div className="ml-[14px] flex gap-[3px]">
          <IconButton name="bucket" size="size-[8px]" />
          <IconButton name="corners" size="size-[8px]" />
          <IconButton name="sliders" size="size-[8px]" />
        </div>
        <label className="ml-[4px] flex h-[10px] flex-1 items-center bg-[#242424] pl-[2px]">
          <span className="w-[6px] text-[#555555]">F</span>
          <input aria-label="Frame" defaultValue="0" className="h-[9px] w-full min-w-0 bg-transparent outline-none" />
        </label>
      </div>
      <div className="flex min-h-0 flex-1">
        <div className="flex min-w-0 flex-1 flex-col">
          <div className="flex h-[10px] shrink-0 items-center gap-[2px] bg-[#303030] pl-[2px]">
            <Icon name="lock" className="size-[7px]" />
            <Icon name="eye" className="ml-[1px] size-[8px]" />
            <Icon name="cubeLine" className="size-[8px]" />
            <Icon name="sound" className="size-[8px]" />
            <Icon name="dropper" className="ml-[1px] size-[7px]" />
            <Icon name="tag" className="ml-[2px] size-[8px]" />
            <span className="ml-[17px]">Name</span>
          </div>
          <div className="grid h-[69px] shrink-0 auto-rows-fr gap-y-px">
            {LAYERS.map((layer) => <LayerRow key={layer.name} layer={layer} />)}
          </div>
          <div className="mt-auto h-[5px] rounded-full bg-[#434343]" />
        </div>
        <div className="mt-[10px] mr-[1px] mb-[7px] ml-[3px] w-[4px] rounded-b-full bg-[#434343]" />
      </div>
      <div className="mt-[1px] flex h-[11px] shrink-0 items-center bg-[#363636] pl-[3px]">
        <Icon name="tag" className="size-[8px]" />
        <span className="ml-[2px]">1 selected</span>
        <IconButton name="keyBox" size="size-[8px]" className="ml-auto" />
        <button type="button" className="ml-[3px] flex h-[10px] items-center gap-[1px] bg-[#222222] px-[3px]"><Icon name="timeLines" className="size-[7px] text-[#24c777]" />Time Editor</button>
        <button type="button" className="flex h-[10px] items-center gap-[1px] bg-[#4b4b4b] px-[3px]"><Icon name="curve" className="size-[7px]" />Graph Editor</button>
      </div>
    </section>
  );
}

const FRAMES = 57;

function Timeline() {
  return (
    <section className="flex min-w-0 flex-1 flex-col bg-[#232323]">
      <div className="relative flex h-[12px] shrink-0 pr-[5px] pl-[6px]">
        {Array.from({ length: FRAMES }, (_, f) => (
          <span key={f} className="relative flex flex-1 items-end">
            <span className={`w-px ${f % 5 ? 'h-[2px] bg-[#777777]' : 'h-[4px] bg-[#aaaaaa]'}`} />
            {f % 5 === 0 && <span className="absolute top-0 left-0 -translate-x-1/2 text-[#bbbbbb]">{f}</span>}
          </span>
        ))}
        <svg viewBox="0 0 8 6" className="absolute bottom-0 left-[3px] h-[6px] w-[8px]" aria-hidden="true">
          <path d="M0 0h8L4 6z" fill="#5cc5a5" />
        </svg>
      </div>
      <div className="flex h-[9px] shrink-0 justify-between bg-[#363636] pr-[3px] pl-[4px]">
        <span className="w-[2px] bg-[#5cc5a5]" />
        <span className="w-[2px] bg-[#5cc5a5]" />
      </div>
      <div className="ml-[6px] flex min-h-0 flex-1 flex-col border-l border-[#28594a] pt-[1px]">
        <div className="grid h-[69px] shrink-0 auto-rows-fr">
          {LAYERS.map((layer) =>
            layer.keys ? (
              <div key={layer.name} className="relative mr-[5px] flex items-center">
                <span className="absolute h-[2px] bg-[#9c7180]" style={{ left: `${(layer.keys[0] / FRAMES) * 100}%`, right: `${100 - (layer.keys[2] / FRAMES) * 100}%` }} />
                {layer.keys.map((k) => (
                  <span key={k} className="absolute size-[3px] -translate-x-1/2 rotate-45 bg-[#dddddd]" style={{ left: `${(k / FRAMES) * 100}%` }} />
                ))}
              </div>
            ) : (
              <div key={layer.name} className={`my-[1px] flex items-center border-r-[5px] border-black/30 pl-[4px] text-[#4b4625] ${layer.bar}`}>{layer.name}</div>
            )
          )}
        </div>
        <div className="mt-auto ml-[21px] h-[5px] w-[364px] rounded-full bg-[#434343]" />
      </div>
      <div className="mt-[1px] flex h-[11px] shrink-0 items-center bg-[#363636] pr-[6px] pl-[3px]">
        <Icon name="keyLayer" className="size-[8px]" />
        <span className="ml-[2px] bg-[#242424] pr-[6px] pl-[1px] whitespace-nowrap">Default Keyframe Layer</span>
        <label className="ml-[3px] flex h-[9px] w-[36px] items-center bg-[#242424] pl-[3px]">
          <span className="w-[6px] text-[#444444]">F</span>
          <input aria-label="Key frame" defaultValue="-" className="h-[9px] w-full min-w-0 bg-transparent outline-none" />
        </label>
        <span className="ml-[3px]">Align:</span>
        <div className="ml-[4px] flex items-center gap-[1px]">
          <IconButton name="alLeft" size="size-[8px]" className="bg-[#232323]" />
          <IconButton name="alCenter" size="size-[8px]" className="bg-[#232323]" />
          <IconButton name="alRight" size="size-[8px]" className="bg-[#232323]" />
          <IconButton name="gridBox" size="size-[8px]" className="ml-[2px] text-[#24c777]" />
          <IconButton name="magnet" size="size-[8px]" className="ml-[2px]" />
          <IconButton name="triOpen" label="Snap options" size="size-[6px]" className="text-[#888888]" />
          <IconButton name="spread" size="size-[8px]" className="ml-[2px]" />
          <IconButton name="triOpen" label="Spread options" size="size-[6px]" className="text-[#888888]" />
        </div>
        <ZoomOut className="ml-auto size-[8px] text-[#aaaaaa]" />
        <Slider label="Timeline zoom" value={75} className="mx-[3px] w-[63px]" />
        <ZoomIn className="size-[8px] text-[#aaaaaa]" />
      </div>
    </section>
  );
}

function SceneWindow() {
  return (
    <div className="flex h-[237px] shrink-0 flex-col">
      <div className="flex h-[12px] shrink-0"><Tab active>Scene Window</Tab><Tab>JavaScript Editor</Tab><Tab>Dependency Graph</Tab></div>
      <div className="flex h-[11px] shrink-0 bg-[#262626]">
        <div className="flex flex-1 items-center pr-[2px]">
          <button type="button" className="flex-1 text-[#a0a0a0]">Original Scene</button>
          <IconButton name="cross" label="Close Original Scene" size="size-[6px]" />
        </div>
        <div className="flex flex-1 items-center bg-[#3a3a3a] pr-[6px]">
          <button type="button" className="flex-1 text-white">Rebuild</button>
          <IconButton name="cross" label="Close Rebuild" size="size-[6px]" />
        </div>
      </div>
      <div className="flex min-h-0 flex-1 gap-[4px]">
        <LayerList />
        <Timeline />
      </div>
    </div>
  );
}

function StatusBar() {
  return (
    <footer className="mt-[3px] mb-[2px] flex h-[11px] shrink-0 items-center bg-[#363636] pr-[1px] pl-[7px]">
      <Icon name="chat" className="size-[8px]" />
      <span className="ml-[2px] flex h-[8px] w-[10px] items-center justify-center rounded-[1px] bg-[#19c463] text-[#12381f]"><Icon name="key" className="size-[8px]" /></span>
      <span className="ml-[4px] size-[3px] rounded-full bg-[#19c463]" />
      <span className="ml-[3px]">File autosaved.</span>
      <span className="ml-auto font-medium text-white">age</span>
      <a href="#tips" className="ml-[3px] flex h-[10px] items-center gap-[2px] bg-[#1ba3ea] px-[3px] text-[#0c2636]">
        Tips and Tricks <Rocket className="size-[7px] fill-[#e8e8e8] text-[#8d2a2a]" />
      </a>
    </footer>
  );
}

export default function App() {
  return (
    <div className="flex h-screen flex-col overflow-hidden bg-[#181818] pt-[4px] pr-[3px] pl-[2px] font-[Roboto,sans-serif] text-[7px] leading-[9px] text-[#dddddd]">
      <TopBar />
      <div className="mt-[3px] flex min-h-0 flex-1 gap-[4px]">
        <aside className="flex w-[314px] shrink-0 flex-col gap-[3px] pb-[3px]">
          <Assets />
          <AttributeEditor />
        </aside>
        <div className="flex min-w-0 flex-1 flex-col">
          <div className="mb-[3px] flex min-h-0 flex-1 gap-[4px]">
            <ToolStrip />
            <Viewport />
            <aside className="flex w-[279px] shrink-0 flex-col gap-[3px]">
              <ColorPanel />
              <AlignPanel />
            </aside>
          </div>
          <SceneWindow />
          <StatusBar />
        </div>
      </div>
    </div>
  );
}
